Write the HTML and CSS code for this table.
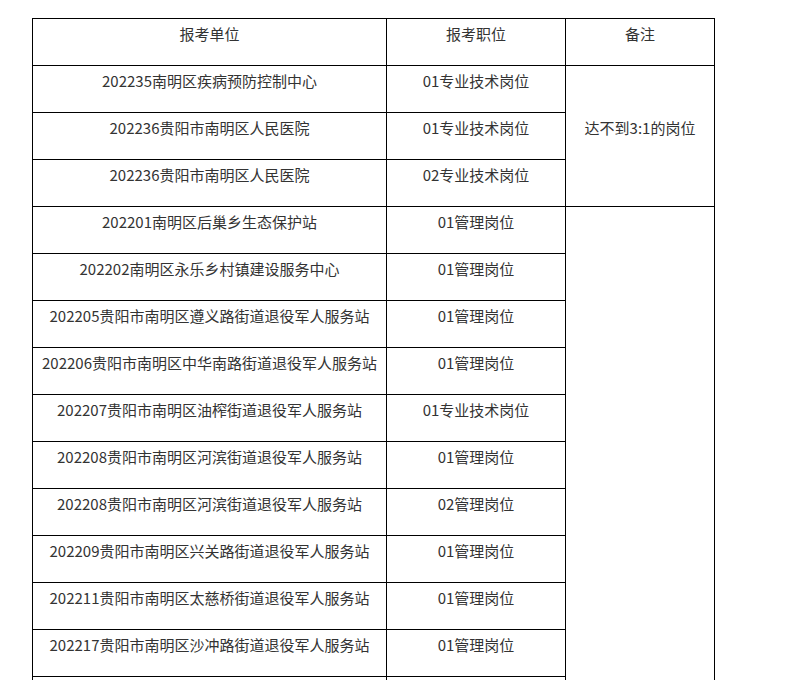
FILE: index.html
```html
<!DOCTYPE html>
<html lang="zh-CN">
<head>
<meta charset="utf-8">
<link rel="stylesheet" href="styles.css">
</head>
<body>
<table class="list">
  <colgroup>
    <col class="c1"><col class="c2"><col class="c3">
  </colgroup>
  <tr><td>报考单位</td><td>报考职位</td><td>备注</td></tr>
  <tr><td>202235南明区疾病预防控制中心</td><td>01专业技术岗位</td><td rowspan="3">达不到3:1的岗位</td></tr>
  <tr><td>202236贵阳市南明区人民医院</td><td>01专业技术岗位</td></tr>
  <tr><td>202236贵阳市南明区人民医院</td><td>02专业技术岗位</td></tr>
  <tr><td>202201南明区后巢乡生态保护站</td><td>01管理岗位</td><td rowspan="12"></td></tr>
  <tr><td>202202南明区永乐乡村镇建设服务中心</td><td>01管理岗位</td></tr>
  <tr><td>202205贵阳市南明区遵义路街道退役军人服务站</td><td>01管理岗位</td></tr>
  <tr><td>202206贵阳市南明区中华南路街道退役军人服务站</td><td>01管理岗位</td></tr>
  <tr><td>202207贵阳市南明区油榨街道退役军人服务站</td><td>01专业技术岗位</td></tr>
  <tr><td>202208贵阳市南明区河滨街道退役军人服务站</td><td>01管理岗位</td></tr>
  <tr><td>202208贵阳市南明区河滨街道退役军人服务站</td><td>02管理岗位</td></tr>
  <tr><td>202209贵阳市南明区兴关路街道退役军人服务站</td><td>01管理岗位</td></tr>
  <tr><td>202211贵阳市南明区太慈桥街道退役军人服务站</td><td>01管理岗位</td></tr>
  <tr><td>202217贵阳市南明区沙冲路街道退役军人服务站</td><td>01管理岗位</td></tr>
  <tr><td>&nbsp;</td><td>&nbsp;</td></tr>
  <tr><td>&nbsp;</td><td>&nbsp;</td></tr>
</table>
</body>
</html>
```
FILE: styles.css
```css
html, body {
  margin: 0;
  background: #fff;
}
body {
  padding: 18px 0 0 32px;
  font-family: "Microsoft YaHei", "Noto Sans CJK SC", "Noto Sans", sans-serif;
  font-size: 15px;
  color: #333;
}
.list {
  border-collapse: collapse;
  table-layout: fixed;
  width: 683px;
}
.c1 { width: 354px; }
.c2 { width: 179px; }
.c3 { width: 149px; }
.list td {
  border: 1px solid #000;
  height: 46px;
  box-sizing: border-box;
  padding: 4px 0 20px;
  line-height: 22px;
  text-align: center;
  vertical-align: middle;
  white-space: nowrap;
}
```
